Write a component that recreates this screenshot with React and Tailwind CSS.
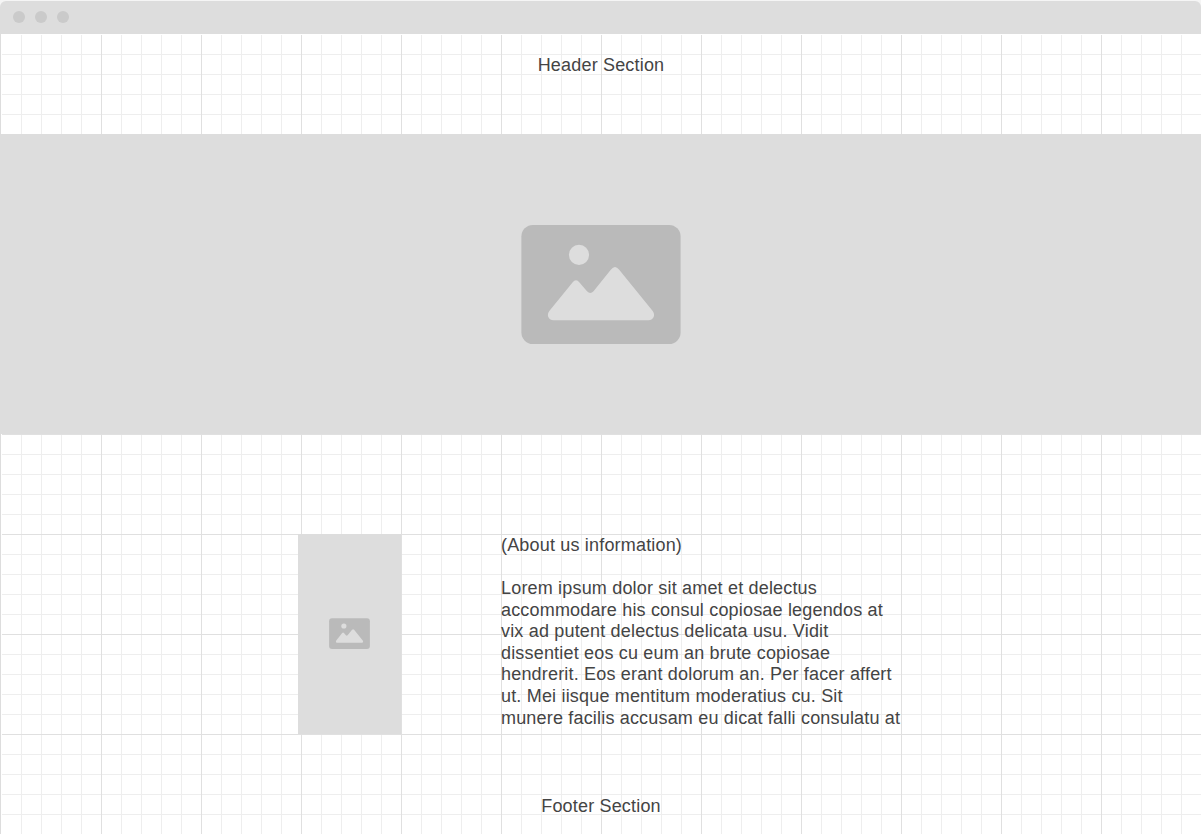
const LINES = [
  'Lorem ipsum dolor sit amet et delectus',
  'accommodare his consul copiosae legendos at',
  'vix ad putent delectus delicata usu. Vidit',
  'dissentiet eos cu eum an brute copiosae',
  'hendrerit. Eos erant dolorum an. Per facer affert',
  'ut. Mei iisque mentitum moderatius cu. Sit',
  'munere facilis accusam eu dicat falli consulatu at',
];

function ImageIcon({ className }) {
  return (
    <svg viewBox="0 0 160 120" className={className} aria-hidden="true">
      <rect x="0.4" y="0.9" width="159.2" height="119.1" rx="11.5" fill="#bababa" />
      <circle cx="58" cy="30.8" r="10.1" fill="#ddd" />
      <path
        d="M28.300 87 L51.500 58.500 Q55 54 58.500 58.500 L66 67.300 Q69.300 70.800 72.500 67.300 L90 45.500 Q94 40.500 98 45.500 L131.700 87 C135 91.500 132 96.200 127.500 96.200 H32.500 C28 96.200 25 91.500 28.300 87 Z"
        fill="#ddd"
      />
    </svg>
  );
}

function WindowBar() {
  return (
    <div className="bg-[#f5f5f5] pt-px">
      <div className="flex h-[33px] items-start gap-[10px] rounded-t-[6px] bg-[#ddd] pt-[10px] pl-[13px]">
        <span className="size-3 rounded-full bg-[#cacaca]" />
        <span className="size-3 rounded-full bg-[#cacaca]" />
        <span className="size-3 rounded-full bg-[#cacaca]" />
      </div>
    </div>
  );
}

export default function App() {
  return (
    <div className="flex h-[834px] w-[1201px] flex-col overflow-hidden bg-white font-['Liberation_Sans',Arial,sans-serif] text-[18px] leading-[21.6px] tracking-[0.18px] text-[#444]">
      <WindowBar />
      <div className="h-[800px] border-l border-[#ddd]">
        <div className="flex h-full flex-col border-t border-l border-white bg-[image:linear-gradient(to_right,#e0e0e0_1px,transparent_1px),linear-gradient(to_bottom,#e0e0e0_1px,transparent_1px),linear-gradient(to_right,#eee_1px,transparent_1px),linear-gradient(to_bottom,#eee_1px,transparent_1px)] bg-size-[100px_100px,100px_100px,20px_20px,20px_20px] bg-position-[-1px_-1px]">
          <header className="h-[99px] pt-[20px] pr-px text-center">Header Section</header>
          <section className="-ml-[2px] flex h-[300px] shrink-0 items-center justify-center bg-[#ddd]">
            <ImageIcon className="h-[120px] w-[160px]" />
          </section>
          <main className="flex h-[300px] shrink-0 pt-[100px] pl-[296px]">
            <div className="flex h-[200px] w-[103px] items-start justify-center bg-[#ddd] pt-[84px]">
              <ImageIcon className="h-[31px] w-[41px]" />
            </div>
            <div className="ml-[100px] w-[420px] pt-[0.8px] whitespace-nowrap">
              <p>(About us information)</p>
              <p className="pt-[21.6px]">
                {LINES.map((line) => (
                  <span key={line} className="block">{line}</span>
                ))}
              </p>
            </div>
          </main>
          <footer className="pt-[62px] pr-px text-center">Footer Section</footer>
        </div>
      </div>
    </div>
  );
}
